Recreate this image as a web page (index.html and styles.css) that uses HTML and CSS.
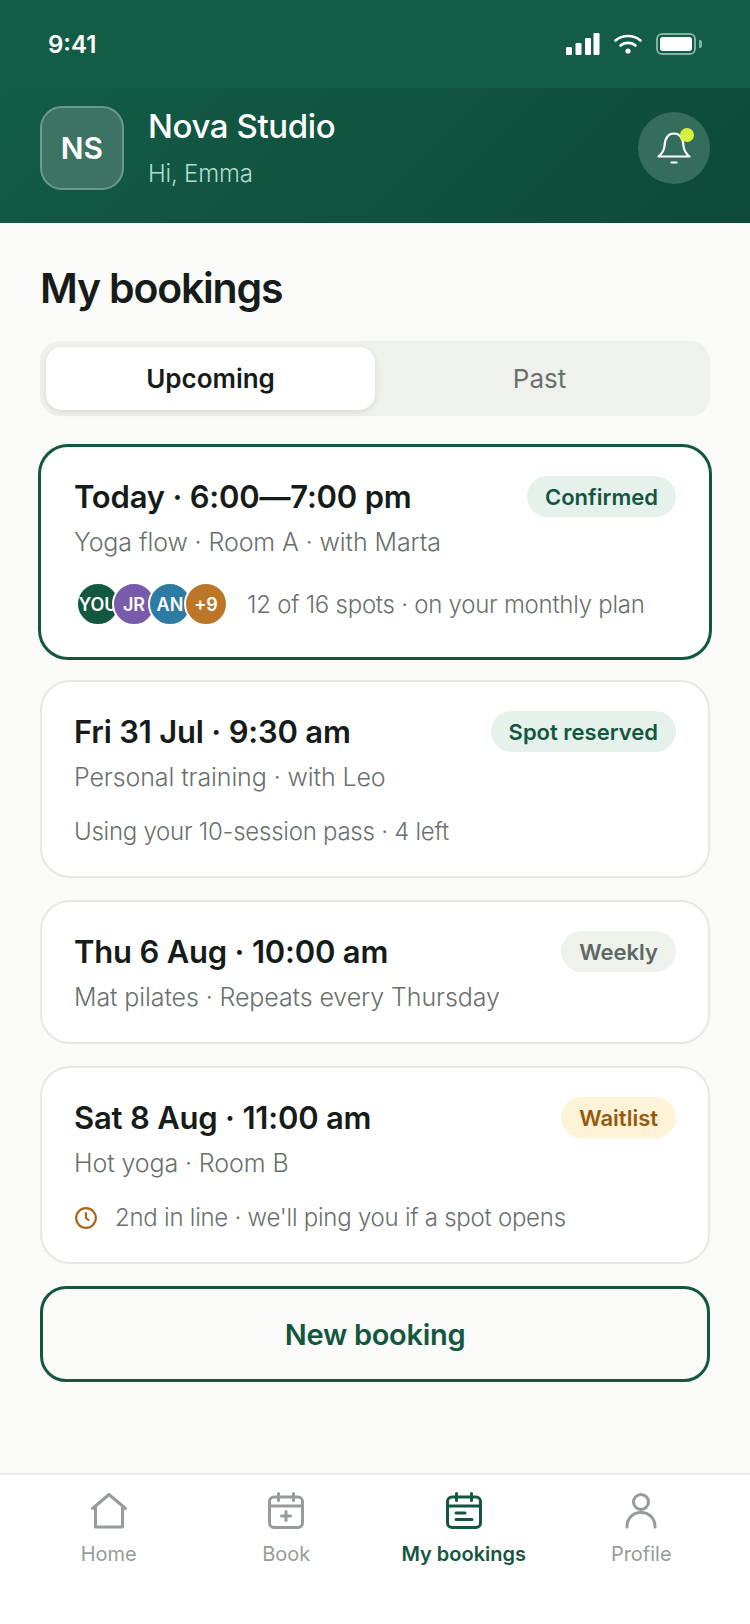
FILE: index.html
```html
<!DOCTYPE html>
<html lang="en">
<head>
  <meta charset="UTF-8">
  <title>My bookings</title>
  <link rel="stylesheet" href="styles.css">
</head>
<body>
  <div class="app">
    <div class="status-bar">
      <span class="time">9:41</span>
      <div class="status-icons">
        <svg width="34" height="22" viewBox="0 0 34 22" fill="#fff"><rect x="0" y="14" width="6" height="8" rx="1.2"/><rect x="9.5" y="10" width="6" height="12" rx="1.2"/><rect x="19" y="5" width="6" height="17" rx="1.2"/><rect x="27.5" y="0" width="6" height="22" rx="1.2"/></svg>
        <svg width="28" height="20" viewBox="0 0 28 20" fill="none" stroke="#fff" stroke-width="2.6" stroke-linecap="round"><path d="M1.5 6.5C8.5 0.5 19.500 0.5 26.500 6.500"/><path d="M6.500 11.500C10.500 8 17.500 8 21.500 11.500"/><circle cx="14" cy="17" r="2.600" fill="#fff" stroke="none"/></svg>
        <div class="battery"><div class="battery-level"></div></div>
      </div>
    </div>

    <header class="header">
      <div class="avatar">NS</div>
      <div class="studio">
        <div class="studio-name">Nova Studio</div>
        <div class="greeting">Hi, Emma</div>
      </div>
      <div class="bell">
        <svg width="36" height="38" viewBox="0 0 36 38" fill="none" stroke="#fff" stroke-width="2.200" stroke-linecap="round" stroke-linejoin="round"><path d="M2.500 27.500h31c-3-2.500-5.500-5-6-10.500C27 9 23.500 4.500 18 4.500S9 9 8.500 17C8 22.500 5.500 25 2.500 27.500z"/><path d="M15.500 33.500h5"/></svg>
        <span class="bell-dot"></span>
      </div>
    </header>

    <main class="content">
      <h1>My bookings</h1>
      <div class="tabs">
        <div class="tab active">Upcoming</div>
        <div class="tab">Past</div>
      </div>

      <div class="card selected">
        <div class="card-top">
          <div class="when">Today · 6:00—7:00 pm</div>
          <span class="badge green">Confirmed</span>
        </div>
        <div class="what">Yoga flow · Room A · with Marta</div>
        <div class="card-foot">
          <div class="people">
            <span class="person p1">YOU</span>
            <span class="person p2">JR</span>
            <span class="person p3">AN</span>
            <span class="person p4">+9</span>
          </div>
          <span>12 of 16 spots · on your monthly plan</span>
        </div>
      </div>

      <div class="card">
        <div class="card-top">
          <div class="when">Fri 31 Jul · 9:30 am</div>
          <span class="badge green">Spot reserved</span>
        </div>
        <div class="what">Personal training · with Leo</div>
        <div class="card-foot plain">
          <span>Using your 10-session pass · 4 left</span>
        </div>
      </div>

      <div class="card">
        <div class="card-top">
          <div class="when">Thu 6 Aug · 10:00 am</div>
          <span class="badge grey">Weekly</span>
        </div>
        <div class="what">Mat pilates · Repeats every Thursday</div>
      </div>

      <div class="card">
        <div class="card-top">
          <div class="when">Sat 8 Aug · 11:00 am</div>
          <span class="badge amber">Waitlist</span>
        </div>
        <div class="what">Hot yoga · Room B</div>
        <div class="card-foot plain">
          <svg class="clock" width="24" height="24" viewBox="0 0 24 24" fill="none" stroke="#a8681a" stroke-width="2.200" stroke-linecap="round" stroke-linejoin="round"><circle cx="12" cy="12" r="9.800"/><path d="M12 7v5l2.500 2"/></svg>
          <span>2nd in line · we'll ping you if a spot opens</span>
        </div>
      </div>

      <button class="new-booking">New booking</button>
    </main>

    <nav class="nav">
      <div class="nav-item">
        <svg width="38" height="38" viewBox="0 0 38 38" fill="none" stroke="currentColor" stroke-width="3" stroke-linecap="round" stroke-linejoin="round"><path d="M2.500 16.500L19 2.500l16.500 14"/><path d="M5.500 14.500V35h27V14.500"/></svg>
        <span>Home</span>
      </div>
      <div class="nav-item">
        <svg width="38" height="38" viewBox="0 0 38 38" fill="none" stroke="currentColor" stroke-width="3" stroke-linecap="round" stroke-linejoin="round"><rect x="2.500" y="5" width="33" height="30.500" rx="4.500"/><path d="M2.500 14h33M11.500 1.500v7M26.500 1.500v7M19 19.500v9M14.500 24h9"/></svg>
        <span>Book</span>
      </div>
      <div class="nav-item active">
        <svg width="38" height="38" viewBox="0 0 38 38" fill="none" stroke="currentColor" stroke-width="3" stroke-linecap="round" stroke-linejoin="round"><rect x="2.500" y="5" width="33" height="30.500" rx="4.500"/><path d="M2.500 14h33M11.500 1.500v7M26.500 1.500v7M11 21h9M11 27.500h16"/></svg>
        <span>My bookings</span>
      </div>
      <div class="nav-item">
        <svg width="38" height="38" viewBox="0 0 38 38" fill="none" stroke="currentColor" stroke-width="3" stroke-linecap="round"><circle cx="19" cy="10" r="7.500"/><path d="M5 35c0-9 6-14.500 14-14.500S33 26 33 35"/></svg>
        <span>Profile</span>
      </div>
    </nav>
  </div>
</body>
</html>
```

FILE: styles.css
```css
* {
  box-sizing: border-box;
  margin: 0;
  padding: 0;
}

body {
  font-family: "Inter", "Liberation Sans", sans-serif;
  background-color: #fafaf8;
  color: #161c19;
}

.app {
  width: 750px;
  height: 1624px;
  display: flex;
  flex-direction: column;
  overflow: hidden;
}

/* Status bar */
.status-bar {
  height: 88px;
  background-color: #135c46;
  color: white;
  display: flex;
  justify-content: space-between;
  align-items: center;
  padding: 0 54px 0 48px;
}

.time {
  font-size: 24px;
  font-weight: 600;
}

.status-icons {
  display: flex;
  align-items: center;
  gap: 14px;
}

.battery {
  position: relative;
  width: 40px;
  height: 22px;
  border: 2px solid #7fb3a1;
  border-radius: 6px;
  padding: 2px;
}

.battery::after {
  content: "";
  position: absolute;
  right: -8px;
  top: 5px;
  width: 3px;
  height: 8px;
  background-color: #7fb3a1;
  border-radius: 0 2px 2px 0;
}

.battery-level {
  width: 100%;
  height: 100%;
  background-color: white;
  border-radius: 3px;
}

/* Header */
.header {
  height: 135px;
  background: linear-gradient(135deg, #135c46, #0d4a38);
  display: flex;
  align-items: center;
  padding: 0 40px 15px;
  color: white;
}

.avatar {
  width: 84px;
  height: 84px;
  border-radius: 22px;
  background-color: #3c7362;
  border: 2px solid #6b9a8b;
  display: flex;
  align-items: center;
  justify-content: center;
  font-size: 30px;
  font-weight: 600;
  margin-right: 24px;
}

.studio {
  flex: 1;
}

.studio-name {
  font-size: 33px;
  font-weight: 500;
  letter-spacing: -0.4px;
  margin-top: -3px;
  margin-bottom: 13px;
}

.greeting {
  font-size: 24px;
  font-weight: 300;
  letter-spacing: -0.2px;
  color: #b4dccd;
}

.bell {
  position: relative;
  width: 72px;
  height: 72px;
  border-radius: 50%;
  background-color: #346d5c;
  display: flex;
  align-items: center;
  justify-content: center;
}

.bell-dot {
  position: absolute;
  top: 16px;
  right: 16px;
  width: 14px;
  height: 14px;
  border-radius: 50%;
  background-color: #d6f03f;
}

/* Content */
.content {
  flex: 1;
  padding: 39px 40px 0;
}

h1 {
  font-size: 41px;
  font-weight: 600;
  letter-spacing: -1.2px;
  line-height: 52px;
  margin-bottom: 27px;
}

.tabs {
  display: flex;
  height: 75px;
  padding: 6px;
  background-color: #eff1ed;
  border-radius: 20px;
  margin-bottom: 28px;
}

.tab {
  flex: 1;
  display: flex;
  align-items: center;
  justify-content: center;
  font-size: 26px;
  color: #68706c;
  border-radius: 16px;
}

.tab.active {
  background-color: white;
  color: #161c19;
  font-weight: 600;
  box-shadow: 0 2px 6px rgba(0, 0, 0, 0.1);
}

.card {
  background-color: white;
  border: 2px solid #e6e8e4;
  border-radius: 30px;
  padding: 29px 32px 30px;
  margin-bottom: 22px;
}

.card.selected {
  border: 3px solid #14573f;
  margin: 0 -2px 20px;
  padding: 29px 33px 31px;
}

.card-top {
  display: flex;
  justify-content: space-between;
  align-items: center;
}

.when {
  font-size: 31px;
  font-weight: 600;
  letter-spacing: -0.2px;
}

.badge {
  height: 41px;
  border-radius: 21px;
  padding: 0 18px;
  display: flex;
  align-items: center;
  font-size: 22px;
  font-weight: 600;
}

.badge.green {
  background-color: #e6f1ec;
  color: #14573f;
}

.badge.grey {
  background-color: #eff1ed;
  color: #5f6863;
}

.badge.amber {
  background-color: #fdf3d7;
  color: #96590f;
}

.what {
  font-size: 25px;
  font-weight: 300;
  letter-spacing: -0.1px;
  color: #6a716d;
  margin-top: 10px;
}

.card-foot {
  display: flex;
  align-items: center;
  font-size: 24px;
  font-weight: 300;
  letter-spacing: -0.25px;
  color: #6a716d;
  margin-top: 25px;
}

.card-foot.plain {
  margin-top: 25px;
}

.clock {
  margin-right: 17px;
}

.people {
  display: flex;
  margin-right: 19px;
  margin-left: 2px;
}

.person {
  width: 44px;
  height: 44px;
  border: 2px solid white;
  border-radius: 50%;
  margin-right: -8px;
  overflow: hidden;
  display: flex;
  align-items: center;
  justify-content: center;
  color: white;
  font-size: 18px;
  font-weight: 600;
  letter-spacing: 0;
  white-space: nowrap;
}

.person:last-child {
  margin-right: 0;
}

.p1 { background-color: #14573f; }
.p2 { background-color: #7a5bab; }
.p3 { background-color: #2d7ba3; }
.p4 { background-color: #bd7628; }

.new-booking {
  display: block;
  width: 100%;
  height: 96px;
  margin-top: 22px;
  background-color: transparent;
  border: 3px solid #14573f;
  border-radius: 26px;
  color: #14573f;
  font-family: inherit;
  font-size: 29px;
  font-weight: 600;
  letter-spacing: -0.3px;
}

/* Bottom nav */
.nav {
  height: 151px;
  background-color: white;
  border-top: 2px solid #eaecea;
  display: flex;
  padding: 17px 20px 0;
}

.nav-item {
  flex: 1;
  display: flex;
  flex-direction: column;
  align-items: center;
  gap: 12px;
  color: #979c99;
  font-size: 20px;
}

.nav-item.active {
  color: #14573f;
  font-weight: 600;
}
```
